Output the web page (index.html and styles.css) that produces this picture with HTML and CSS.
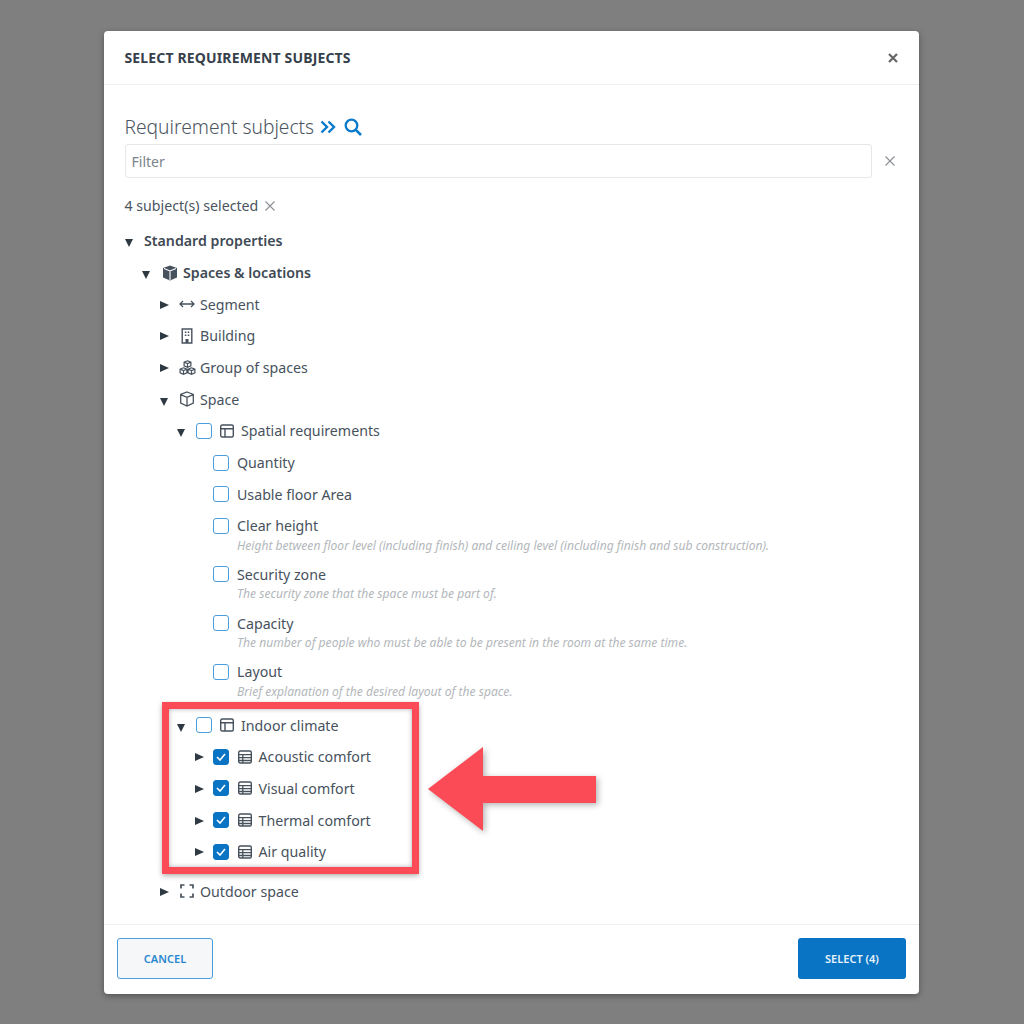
FILE: index.html
```html
<!DOCTYPE html>
<html lang="en">
<head>
<meta charset="utf-8">
<title>Select requirement subjects</title>
<link rel="stylesheet" href="styles.css">
</head>
<body>
<svg class="defs" width="0" height="0" aria-hidden="true">
  <defs>
    <symbol id="i-panel" viewBox="0 0 14 14"><rect x=".7" y="1" width="12.6" height="12" rx="1.500" fill="none" stroke="currentColor" stroke-width="1.400"/><path d="M.7 4.800h12.600M5 4.800V13" fill="none" stroke="currentColor" stroke-width="1.400"/></symbol>
    <symbol id="i-table" viewBox="0 0 14 14"><rect x=".7" y="1" width="12.6" height="12" rx="1.500" fill="none" stroke="currentColor" stroke-width="1.400"/><path d="M.7 4.700h12.600M.7 7.700h12.600M.7 10.500h12.600M4.800 4.700V13" fill="none" stroke="currentColor" stroke-width="1.300"/></symbol>
    <symbol id="i-check" viewBox="0 0 10 8"><path d="M1 4l3 3 5-6" fill="none" stroke="#fff" stroke-width="1.600"/></symbol>
  </defs>
</svg>
<main class="modal">
  <header class="modal-head">
    <h1 class="modal-title">SELECT REQUIREMENT SUBJECTS</h1>
    <svg class="close-bold" viewBox="0 0 10 10"><path d="M1 1l8 8M9 1l-8 8" fill="none" stroke="currentColor" stroke-width="2.200"/></svg>
  </header>
  <section class="modal-body">
    <div class="heading">
      <span class="heading-text">Requirement subjects</span>
      <svg class="chev" viewBox="0 0 16 14"><path d="M1.500 1.500L7 7l-5.500 5.500M8.500 1.500L14 7l-5.500 5.500" fill="none" stroke="currentColor" stroke-width="2.400"/></svg>
      <svg class="search" viewBox="0 0 18 18"><circle cx="7.500" cy="7.500" r="5.800" fill="none" stroke="currentColor" stroke-width="2.300"/><path d="M11.800 11.800L17 17" fill="none" stroke="currentColor" stroke-width="2.600"/></svg>
    </div>
    <div class="filter-row">
      <div class="filter">Filter</div>
      <svg class="close-thin" viewBox="0 0 10 10"><path d="M.5.5l9 9M9.500.5l-9 9" fill="none" stroke="currentColor" stroke-width="1.100"/></svg>
    </div>
    <div class="selected">4 subject(s) selected <svg class="close-thin small" viewBox="0 0 10 10"><path d="M.5.5l9 9M9.500.5l-9 9" fill="none" stroke="currentColor" stroke-width="1.100"/></svg></div>

    <ul class="tree">
      <li class="row l0 bold"><i class="caret down"></i><span>Standard properties</span></li>
      <li class="row l1 bold"><i class="caret down"></i>
        <svg class="ic ic-cube" viewBox="0 0 16 16"><path d="M8 .5L15 3v9.500L8 15.500 1 12.500V3z" fill="currentColor"/><path d="M2 3.600L8 6l6-2.400M8 6v9" fill="none" stroke="#fff" stroke-width="1.100"/></svg>
        <span>Spaces &amp; locations</span></li>
      <li class="row l2"><i class="caret right"></i>
        <svg class="ic" viewBox="0 0 16 16"><path d="M1 8h14M4 5L1 8l3 3M12 5l3 3-3 3" fill="none" stroke="currentColor" stroke-width="1.300"/></svg>
        <span>Segment</span></li>
      <li class="row l2"><i class="caret right"></i>
        <svg class="ic" viewBox="0 0 16 16"><path d="M3.200 1h9.600v14H3.200z" fill="none" stroke="currentColor" stroke-width="1.400"/><path d="M5.800 3.500h1.600v1.600H5.800zM8.700 3.500h1.600v1.600H8.700zM5.800 6.500h1.600v1.600H5.800zM8.700 6.500h1.600v1.600H8.700zM6.500 11h3v4h-3z" fill="currentColor"/></svg>
        <span>Building</span></li>
      <li class="row l2"><i class="caret right"></i>
        <svg class="ic ic-wide" viewBox="0 0 17 16"><path d="M8.500.8l3.400 1.300v3.800L8.500 7.300 5.100 5.900V2.100zM5.100 2.200l3.400 1.400 3.400-1.400M8.500 3.600v3.700M4.500 7.800l3.400 1.300v3.800l-3.400 1.400-3.400-1.400V9.100zM1.100 9.200l3.400 1.400 3.400-1.400M4.500 10.600v3.700M12.500 7.800l3.400 1.300v3.800l-3.400 1.400-3.400-1.400V9.100zM9.100 9.200l3.400 1.400 3.400-1.400M12.500 10.600v3.700" fill="none" stroke="currentColor" stroke-width="1.200"/></svg>
        <span>Group of spaces</span></li>
      <li class="row l2"><i class="caret down"></i>
        <svg class="ic" viewBox="0 0 16 16"><path d="M8 1l6.300 2.500v8.700L8 15l-6.300-2.800V3.500zM1.700 3.700L8 6.300l6.300-2.600M8 6.300V15" fill="none" stroke="currentColor" stroke-width="1.300"/></svg>
        <span>Space</span></li>
      <li class="row l3"><i class="caret down"></i><i class="cb"></i><svg class="ic-t"><use href="#i-panel"/></svg><span>Spatial requirements</span></li>
      <li class="row l4"><i class="cb"></i><span>Quantity</span></li>
      <li class="row l4"><i class="cb"></i><span>Usable floor Area</span></li>
      <li class="row l4 has-desc"><div class="row-main"><i class="cb"></i><span>Clear height</span></div><p class="desc">Height between floor level (including finish) and ceiling level (including finish and sub construction).</p></li>
      <li class="row l4 has-desc"><div class="row-main"><i class="cb"></i><span>Security zone</span></div><p class="desc">The security zone that the space must be part of.</p></li>
      <li class="row l4 has-desc"><div class="row-main"><i class="cb"></i><span>Capacity</span></div><p class="desc">The number of people who must be able to be present in the room at the same time.</p></li>
      <li class="row l4 has-desc last"><div class="row-main"><i class="cb"></i><span>Layout</span></div><p class="desc">Brief explanation of the desired layout of the space.</p></li>
      <li class="row l3"><i class="caret down"></i><i class="cb"></i><svg class="ic-t"><use href="#i-panel"/></svg><span>Indoor climate</span></li>
      <li class="row l5"><i class="caret right"></i><i class="cb on"><svg><use href="#i-check"/></svg></i><svg class="ic-t"><use href="#i-table"/></svg><span>Acoustic comfort</span></li>
      <li class="row l5"><i class="caret right"></i><i class="cb on"><svg><use href="#i-check"/></svg></i><svg class="ic-t"><use href="#i-table"/></svg><span>Visual comfort</span></li>
      <li class="row l5"><i class="caret right"></i><i class="cb on"><svg><use href="#i-check"/></svg></i><svg class="ic-t"><use href="#i-table"/></svg><span>Thermal comfort</span></li>
      <li class="row l5"><i class="caret right"></i><i class="cb on"><svg><use href="#i-check"/></svg></i><svg class="ic-t"><use href="#i-table"/></svg><span>Air quality</span></li>
      <li class="row l2 outdoor"><i class="caret right"></i>
        <svg class="ic" viewBox="0 0 16 16"><path d="M2 5.500V2h3.500M10.500 2H14v3.500M14 10.500V14h-3.500M5.500 14H2v-3.500" fill="none" stroke="currentColor" stroke-width="1.700"/></svg>
        <span>Outdoor space</span></li>
    </ul>
  </section>
  <footer class="modal-foot">
    <div class="btn btn-ghost">CANCEL</div>
    <div class="btn btn-primary">SELECT (4)</div>
  </footer>
</main>
<div class="callout-box"></div>
<svg class="callout-arrow" viewBox="0 0 170 86"><path d="M0 43L55 1v29h113v27H55v28z" fill="#fb4b56"/></svg>
</body>
</html>
```

FILE: styles.css
```css
* { box-sizing: border-box; }
html, body { margin: 0; height: 100%; }
body {
  position: relative;
  width: 1024px;
  height: 1024px;
  overflow: hidden;
  background: #7f7f7f;
  padding: 31px 0 0 104px;
  font-family: "Noto Sans", "Open Sans", sans-serif;
  color: #3f4a55;
}
.defs { position: absolute; }
.modal {
  width: 815px;
  height: 963px;
  background: #fff;
  border-radius: 4px;
  box-shadow: 0 2px 6px rgba(0,0,0,.35);
  display: flex;
  flex-direction: column;
}
.modal-head {
  height: 54px;
  flex: none;
  padding: 0 21px 0 20.500px;
  border-bottom: 1px solid #eff0f2;
  display: flex;
  align-items: center;
  justify-content: space-between;
}
.modal-title { margin: 0; font-size: 14px; font-weight: 700; letter-spacing: .15px; color: #36404a; }
.close-bold { width: 10px; height: 10px; color: #666; }
.modal-body { flex: 1; padding: 29px 21px 0 20.500px; min-height: 0; }
.heading { display: flex; align-items: center; height: 25px; }
.heading-text { font-size: 19.200px; font-weight: 300; color: #4a5560; }
.chev { width: 16px; height: 14px; color: #0a7acb; margin-left: 5.500px; }
.search { width: 18px; height: 18px; color: #0a7acb; margin-left: 8px; }
.filter-row { display: flex; align-items: center; margin-top: 5px; }
.filter {
  width: 747.500px;
  height: 34px;
  border: 1px solid #e6e7e9;
  border-radius: 3px;
  padding: 0 6px;
  font-size: 14px;
  line-height: 33px;
  color: #7b838b;
}
.close-thin { width: 10px; height: 10px; color: #8a8f95; margin-left: 13px; }
.close-thin.small { margin-left: 3px; }
.selected { margin-top: 18px; height: 19px; font-size: 14.200px; line-height: 19px; color: #4a5560; }
.tree { list-style: none; margin: 10px 0 0 .5px; padding: 0; font-size: 14.200px; }
.row { display: flex; align-items: center; height: 31.7px; color: #47525d; }
.bold { font-weight: 600; color: #3f4a55; }
.l0 { padding-left: 0; }
.l1 { padding-left: 17px; }
.l2 { padding-left: 35px; }
.l3 { padding-left: 52px; }
.l4 { padding-left: 88px; }
.l5 { padding-left: 70px; }
.caret { width: 19px; flex: none; display: block; height: 10px; position: relative; }
.caret::before { content: ""; position: absolute; border-style: solid; border-color: transparent; }
.caret.down::before { left: 0; top: 3.500px; border-width: 8px 4.700px 0; border-top-color: #2f3942; }
.caret.right::before { left: 0; top: 1.500px; border-width: 4.600px 0 4.600px 9px; border-left-color: #2f3942; }
.ic { width: 16px; height: 16px; flex: none; margin-right: 5px; color: #47525d; }
.ic-wide { width: 17px; margin-right: 4px; }
.l1 .ic { margin-left: 1px; margin-right: 5px; }
.cb {
  width: 16px; height: 16px; flex: none; display: flex; align-items: center; justify-content: center;
  border: 1.500px solid #4a9ede; border-radius: 3px; background: #fff;
}
.cb.on { background: #0a74c4; border-color: #0a74c4; }
.cb.on svg { width: 10px; height: 8px; }
.l4 .cb { margin-right: 8px; }
.ic-t { width: 14px; height: 14px; flex: none; margin: 0 7px 0 8px; color: #47525d; }
.l5 .caret { width: 18px; }
.l5 .ic-t { margin: 0 6.500px 0 9px; }
.has-desc { display: block; height: 48.670px; padding-top: 6px; }
.has-desc.last { height: 53px; }
.row-main { display: flex; align-items: center; height: 19px; }
.desc { margin: 2.500px 0 0 24px; font-size: 12.100px; line-height: 15px; font-style: italic; color: #b3b7bb; }
.outdoor { margin-top: 8px; }
.modal-foot {
  height: 70px;
  flex: none;
  border-top: 1px solid #eff0f2;
  padding: 13px 13px 0;
  display: flex;
  justify-content: space-between;
  align-items: flex-start;
}
.btn { height: 41px; border-radius: 3px; font-size: 11px; font-weight: 600; display: flex; align-items: center; justify-content: center; }
.btn-ghost { width: 96px; background: #f6f7f9; border: 1px solid #4a9ede; color: #2a87cf; }
.btn-primary { width: 108px; background: #0a74c4; color: #e6f2fb; }
.callout-box {
  position: absolute;
  left: 162px;
  top: 702px;
  width: 257px;
  height: 172px;
  border: 7.500px solid #fb4b56;
  box-shadow: 0 2px 5px rgba(0,0,0,.3), inset 0 0 5px rgba(0,0,0,.3);
}
.callout-arrow {
  position: absolute;
  left: 428px;
  top: 745.500px;
  width: 170px;
  height: 86px;
  filter: drop-shadow(2px 2px 3px rgba(0,0,0,.3));
}
```
